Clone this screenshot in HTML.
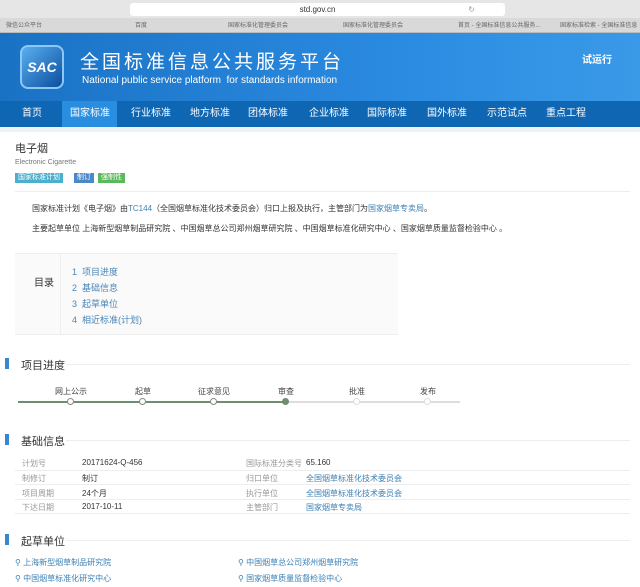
<!DOCTYPE html>
<html><head><meta charset="utf-8"><style>
*{margin:0;padding:0;box-sizing:border-box}
body{width:640px;height:587px;overflow:hidden;background:#fff;font-family:"Liberation Sans","Noto Sans CJK SC",sans-serif;position:relative;color:#333}
.a{position:absolute;white-space:nowrap}
.top{left:0;top:0;width:640px;height:18px;background:#e6e6e6}
.url{left:130px;top:3px;width:375px;height:13px;background:#fff;border-radius:3px;font-size:8px;text-align:center;line-height:13px;color:#333}
.bm{left:0;top:18px;width:640px;height:15px;background:#d9d9d9;border-bottom:1px solid #bbb}
.bm span{position:absolute;top:2px;font-size:6px;color:#666}
.hdr{left:0;top:33px;width:640px;height:68px;background:linear-gradient(90deg,#1a72c4,#2a8ae0 60%,#3a9ae8)}
.nav{left:0;top:101px;width:640px;height:26px;background:#0f66b3}
.nav span{position:absolute;top:0;line-height:26px;font-size:10px;color:#fff}
.tag{top:173px;height:10px;font-size:7px;color:#fff;line-height:10px;padding:0 3px}
.toc{left:15px;top:253px;width:383px;height:82px;background:#fafafa;border-top:1px solid #eee;border-bottom:1px solid #eee}
.toc a{position:absolute;left:57px;font-size:9px;color:#4a86b8}
.sec{font-size:11px;color:#333}
.bar{width:4px;height:11px;background:#3a85d0}
.hl{height:1px;background:#eee}
.lab{font-size:8px;color:#999}
.val{font-size:8px;color:#333}
.lnk{font-size:8px;color:#3a7fb5}
.dot{width:7px;height:7px;border-radius:50%;border:1px solid #888;background:#fff;top:398px}
.st{font-size:8px;color:#444;top:386px}
</style></head><body>
<div class="a top"></div>
<div class="a url">std.gov.cn<span style="position:absolute;right:30px;color:#999">↻</span></div>
<div class="a bm"><span style="left:6px">微信公众平台</span><span style="left:135px">百度</span><span style="left:228px">国家标准化管理委员会</span><span style="left:343px">国家标准化管理委员会</span><span style="left:458px">首页 - 全国标准信息公共服务...</span><span style="left:560px">国家标准检索 - 全国标准信息</span></div>
<div class="a hdr"></div>
<div class="a" style="left:20px;top:45px;width:44px;height:44px;border-radius:8px;background:linear-gradient(135deg,#5aaef0,#0a4fa0);border:2px solid #8cc8f5;color:#fff;font-weight:bold;font-style:italic;font-size:14px;line-height:40px;text-align:center">SAC</div>
<div class="a" style="left:80px;top:47px;font-size:19px;color:#fff;letter-spacing:3px">全国标准信息公共服务平台</div>
<div class="a" style="left:82px;top:75px;font-size:10px;color:#fff">National public service platform&nbsp; for standards information</div>
<div class="a" style="left:582px;top:51px;font-size:10px;color:#fff;font-weight:bold">试运行</div>
<div class="a nav"><span style="left:62px;width:55px;height:26px;background:#2a8ee0"></span><span style="left:22px">首页</span><span style="left:70px">国家标准</span><span style="left:131px">行业标准</span><span style="left:190px">地方标准</span><span style="left:248px">团体标准</span><span style="left:309px">企业标准</span><span style="left:367px">国际标准</span><span style="left:427px">国外标准</span><span style="left:487px">示范试点</span><span style="left:546px">重点工程</span></div>
<div class="a" style="left:0;top:127px;width:640px;height:5px;background:#eef2f5"></div>
<div class="a" style="left:15px;top:143px;font-size:11px;line-height:13px;color:#333">电子烟</div>
<div class="a" style="left:15px;top:158px;font-size:7px;line-height:9px;color:#777">Electronic Cigarette</div>
<div class="a tag" style="left:15px;background:#4ab0d0">国家标准计划</div>
<div class="a tag" style="left:74px;background:#4a88c8">制订</div>
<div class="a tag" style="left:98px;background:#5cb85c">强制性</div>
<div class="a hl" style="left:15px;top:191px;width:615px"></div>
<div class="a" style="left:32px;top:203px;font-size:8px;color:#333">国家标准计划《电子烟》由<span style="color:#3a7fb5">TC144</span>（全国烟草标准化技术委员会）归口上报及执行，主管部门为<span style="color:#3a7fb5">国家烟草专卖局</span>。</div>
<div class="a" style="left:32px;top:223px;font-size:8px;color:#333">主要起草单位 上海新型烟草制品研究院 、中国烟草总公司郑州烟草研究院 、中国烟草标准化研究中心 、国家烟草质量监督检验中心 。</div>
<div class="a toc"><div style="position:absolute;left:0;top:0;width:46px;height:80px;border-right:1px solid #eee"></div><div style="position:absolute;left:19px;top:20px;font-size:10px">目录</div>
<a style="top:11px">1&nbsp; 项目进度</a><a style="top:27px">2&nbsp; 基础信息</a><a style="top:43px">3&nbsp; 起草单位</a><a style="top:59px">4&nbsp; 相近标准(计划)</a></div>
<div class="a bar" style="left:5px;top:358px"></div><div class="a sec" style="left:21px;top:357px">项目进度</div><div class="a hl" style="left:66px;top:364px;width:564px"></div>
<div class="a" style="left:18px;top:401px;width:268px;height:2px;background:#6d8f6d"></div>
<div class="a" style="left:286px;top:401px;width:174px;height:2px;background:#ddd"></div>
<div class="a st" style="left:55px">网上公示</div><div class="a st" style="left:135px">起草</div><div class="a st" style="left:198px">征求意见</div><div class="a st" style="left:278px">审查</div><div class="a st" style="left:349px">批准</div><div class="a st" style="left:420px">发布</div>
<div class="a dot" style="left:67px"></div><div class="a dot" style="left:139px"></div><div class="a dot" style="left:210px"></div><div class="a dot" style="left:282px;background:#6d8f6d;border-color:#6d8f6d"></div><div class="a dot" style="left:353px;border-color:#ddd"></div><div class="a dot" style="left:424px;border-color:#ddd"></div>
<div class="a bar" style="left:5px;top:434px"></div><div class="a sec" style="left:21px;top:433px">基础信息</div><div class="a hl" style="left:66px;top:440px;width:564px"></div>
<div class="a lab" style="left:22px;top:458px">计划号</div><div class="a val" style="left:82px;top:458px">20171624-Q-456</div><div class="a lab" style="left:246px;top:458px">国际标准分类号</div><div class="a val" style="left:306px;top:458px">65.160</div>
<div class="a hl" style="left:15px;top:470px;width:615px"></div>
<div class="a lab" style="left:22px;top:473px">制修订</div><div class="a val" style="left:82px;top:473px">制订</div><div class="a lab" style="left:246px;top:473px">归口单位</div><div class="a lnk" style="left:306px;top:473px">全国烟草标准化技术委员会</div>
<div class="a hl" style="left:15px;top:484px;width:615px"></div>
<div class="a lab" style="left:22px;top:488px">项目周期</div><div class="a val" style="left:82px;top:488px">24个月</div><div class="a lab" style="left:246px;top:488px">执行单位</div><div class="a lnk" style="left:306px;top:488px">全国烟草标准化技术委员会</div>
<div class="a hl" style="left:15px;top:499px;width:615px"></div>
<div class="a lab" style="left:22px;top:502px">下达日期</div><div class="a val" style="left:82px;top:502px">2017-10-11</div><div class="a lab" style="left:246px;top:502px">主管部门</div><div class="a lnk" style="left:306px;top:502px">国家烟草专卖局</div>
<div class="a hl" style="left:15px;top:513px;width:615px"></div>
<div class="a bar" style="left:5px;top:534px"></div><div class="a sec" style="left:21px;top:533px">起草单位</div><div class="a hl" style="left:66px;top:540px;width:564px"></div>
<div class="a lnk" style="left:15px;top:557px">⚲ 上海新型烟草制品研究院</div><div class="a lnk" style="left:238px;top:557px">⚲ 中国烟草总公司郑州烟草研究院</div>
<div class="a lnk" style="left:15px;top:573px">⚲ 中国烟草标准化研究中心</div><div class="a lnk" style="left:238px;top:573px">⚲ 国家烟草质量监督检验中心</div>
</body></html>
